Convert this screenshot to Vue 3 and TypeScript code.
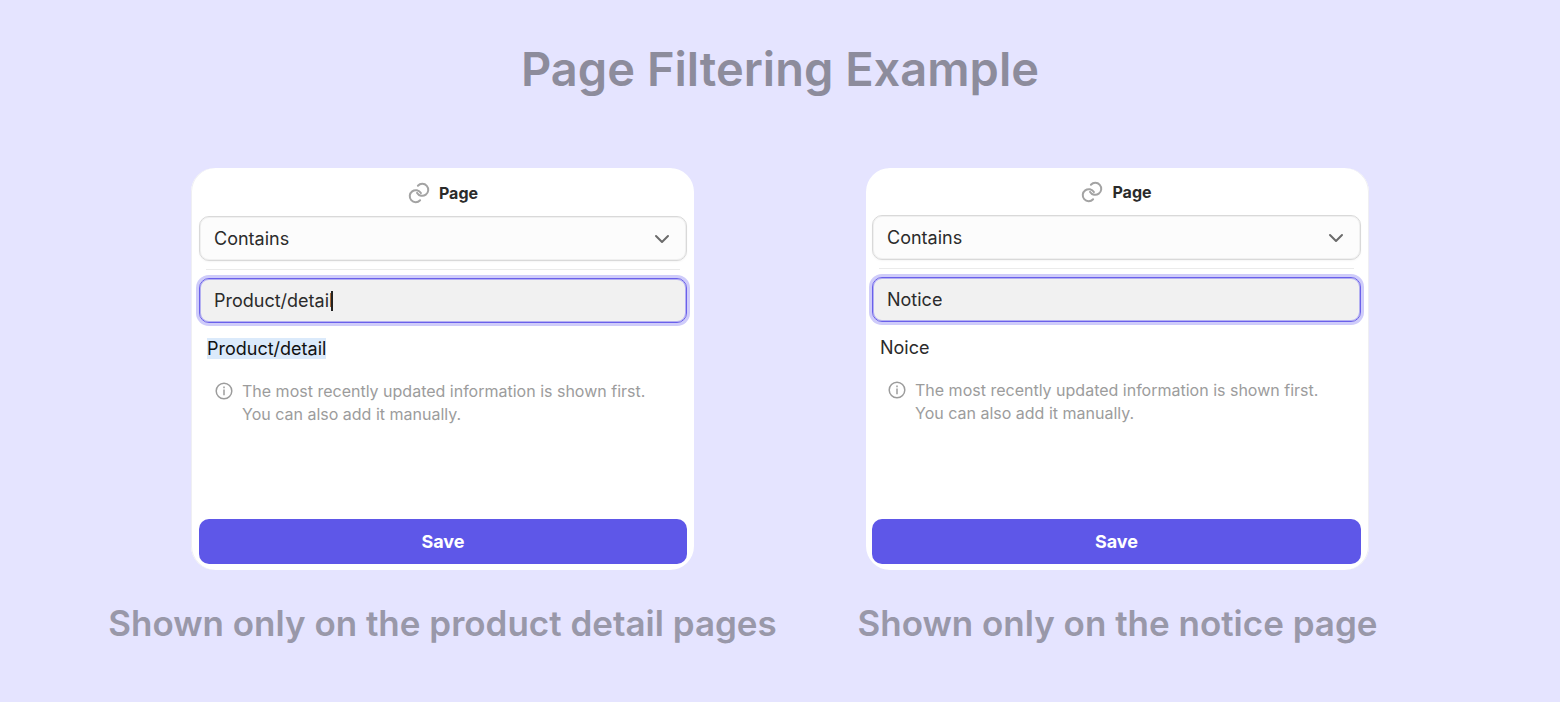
<script setup lang="ts">
interface Example {
  id: string
  variant: string
  value: string
  suggestion: string
  highlighted: boolean
  caption: string
}

const examples: Example[] = [
  {
    id: 'product',
    variant: 'card-product',
    value: 'Product/detail',
    suggestion: 'Product/detail',
    highlighted: true,
    caption: 'Shown only on the product detail pages',
  },
  {
    id: 'notice',
    variant: 'card-notice',
    value: 'Notice',
    suggestion: 'Noice',
    highlighted: false,
    caption: 'Shown only on the notice page',
  },
]
</script>

<template>
  <main class="page">
    <h1 class="title">Page Filtering Example</h1>
    <div class="examples">
      <section v-for="item in examples" :key="item.id" class="example">
        <form class="card" :class="item.variant" @submit.prevent>
          <h2 class="heading">
            <svg class="link-icon" viewBox="0 0 22 22" aria-hidden="true">
              <path d="M9.9 3.7A6 6 0 1 1 9.1 10.9" />
              <path d="M12.1 18.3A6 6 0 1 1 12.9 11.1" />
            </svg>
            <span>Page</span>
          </h2>
          <div class="select-wrap">
            <select :id="`${item.id}-match`" class="select" aria-label="Match type">
              <option>Contains</option>
            </select>
            <svg class="chevron" viewBox="0 0 16 16" aria-hidden="true">
              <path d="M2 5l6 6 6-6" />
            </svg>
          </div>
          <hr class="divider" />
          <label class="field">
            <input class="input" type="text" aria-label="Page path" :value="item.value" />
            <span v-if="item.highlighted" class="caret"></span>
          </label>
          <p class="suggestion">
            <span :class="{ highlighted: item.highlighted }">{{ item.suggestion }}</span>
          </p>
          <div class="hint">
            <svg class="info-icon" viewBox="0 0 18 18" aria-hidden="true">
              <circle cx="9" cy="9" r="7.8" />
              <path d="M9 7.6v5.6" />
              <path d="M9 4.5v1.8" />
            </svg>
            <p class="hint-text">
              The most recently updated information is shown first.<br />You can also add it manually.
            </p>
          </div>
          <button class="save" type="submit">Save</button>
        </form>
        <p class="caption">{{ item.caption }}</p>
      </section>
    </div>
  </main>
</template>

<style>
body {
  margin: 0;
  background: #e5e4ff;
}
</style>

<style scoped>
.page {
  box-sizing: border-box;
  min-height: 100vh;
  padding: 39px 105px;
  background: #e5e4ff;
  font-family: Inter, "Liberation Sans", sans-serif;
  color: #2b2b2b;
}

.title {
  margin: 0 0 69px;
  font-size: 47px;
  line-height: 60px;
  font-weight: 600;
  text-align: center;
  color: #8d8c9c;
}

.examples {
  display: grid;
  grid-template-columns: repeat(2, minmax(0, 1fr));
}

.example {
  display: flex;
  flex-direction: column;
  align-items: center;
}

.card {
  box-sizing: border-box;
  display: flex;
  flex-direction: column;
  width: 100%;
  max-width: 503px;
  min-height: 402px;
  border-radius: 24px;
  background: #fff;
}

.card-product {
  padding: 10px 7px 6px 8px;
  box-shadow: inset 1px 0 #efeff3;
}

.card-notice {
  padding: 9px 8px 6px 6px;
  box-shadow: inset -1px 0 #efeff3;
}

.heading {
  display: flex;
  align-items: center;
  justify-content: center;
  gap: 9px;
  margin: 0 0 8px;
  font-size: 16px;
  line-height: 30px;
  font-weight: 700;
}

.link-icon {
  width: 22px;
  height: 22px;
  fill: none;
  stroke: #a3a3a3;
  stroke-width: 2;
  stroke-linecap: round;
}

.select-wrap {
  position: relative;
}

.select {
  box-sizing: border-box;
  display: block;
  width: 100%;
  height: 45px;
  padding: 0 14px;
  border: 1px solid #d9d9d9;
  border-radius: 10px;
  appearance: none;
  background: #fcfcfc;
  font: inherit;
  font-size: 18px;
  color: inherit;
  box-shadow: inset 0 0 0 1px #f0f0f0, 0 1px 2px rgba(0, 0, 0, 0.04);
}

.chevron {
  position: absolute;
  top: 15px;
  right: 17px;
  width: 16px;
  height: 16px;
  fill: none;
  stroke: #6b6b6b;
  stroke-width: 2;
  stroke-linecap: round;
  stroke-linejoin: round;
  pointer-events: none;
}

.divider {
  width: calc(100% - 14px);
  height: 1px;
  margin: 8px auto;
  border: 0;
  background: #ebebeb;
}

.field {
  box-sizing: border-box;
  display: flex;
  align-items: center;
  height: 45px;
  padding: 0 14px;
  border: 1px solid #6a60ea;
  border-radius: 10px;
  background: #f1f1f1;
  box-shadow: inset 0 0 0 1px #b4b0f1, 0 0 0 3px #cfccfa;
}

.input {
  field-sizing: content;
  min-width: 0;
  padding: 0;
  border: 0;
  outline: 0;
  background: transparent;
  font: inherit;
  font-size: 18px;
  line-height: 24px;
  color: inherit;
}

.caret {
  width: 2px;
  height: 20px;
  margin-left: -2px;
  background: #222;
}

.suggestion {
  margin: 14px 8px 0;
  font-size: 18px;
  line-height: 24px;
}

.highlighted {
  background: #dbeafb;
  color: #111;
}

.hint {
  display: flex;
  gap: 9px;
  margin: 19px 16px 0;
  color: #9c9c9c;
}

.info-icon {
  flex: none;
  width: 18px;
  height: 18px;
  margin-top: 2px;
  fill: none;
  stroke: #9c9c9c;
  stroke-width: 1.5;
}

.hint-text {
  margin: 0;
  font-size: 16px;
  line-height: 23px;
}

.save {
  height: 45px;
  margin-top: auto;
  border: 0;
  border-radius: 10px;
  background: #5e57e8;
  font: inherit;
  font-size: 18px;
  font-weight: 700;
  color: #fff;
}

.caption {
  margin: 30px 0 0;
  font-size: 35px;
  line-height: 46px;
  font-weight: 600;
  text-align: center;
  color: #9998a9;
}
</style>
